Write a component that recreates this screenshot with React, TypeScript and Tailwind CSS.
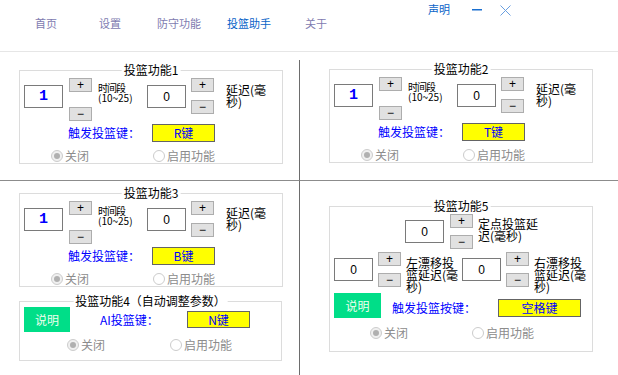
import React from 'react';

function NumBox({ value, big }: { value: string; big?: boolean }) {
  return (
    <div className="w-[39px] h-[23px] border border-[#7a7a7a] bg-white flex items-center justify-center">
      {big ? (
        <span className="text-[15px] leading-none font-bold text-[#0000ff] font-['Liberation_Mono',monospace]">{value}</span>
      ) : (
        <span className="text-[12px] leading-none text-black font-['Liberation_Sans',sans-serif]">{value}</span>
      )}
    </div>
  );
}

function SpinBtn({ sign }: { sign: string }) {
  return (
    <div className="w-[23px] h-[14px] bg-[#e1e1e1] border border-[#adadad] flex items-center justify-center text-[12px] leading-none text-black font-['Liberation_Sans',sans-serif]">
      {sign}
    </div>
  );
}

function Spin({ gap }: { gap: string }) {
  return (
    <div className={`flex flex-col ${gap}`}>
      <SpinBtn sign="+" />
      <SpinBtn sign="−" />
    </div>
  );
}

function Radio({ checked, label }: { checked?: boolean; label: string }) {
  return (
    <div className="flex items-center h-[13px]">
      <span className={`w-[12px] h-[12px] rounded-full border border-[#cccccc] flex items-center justify-center ${checked ? 'bg-[#f0f0f0]' : 'bg-white'}`}>
        {checked && <span className="w-[6px] h-[6px] rounded-full bg-[#b0b0b0]" />}
      </span>
      <span className="ml-[2px] text-[12px] leading-[12px] text-[#8c8c8c]">{label}</span>
    </div>
  );
}

function KeyBox({ text, size }: { text: string; size: string }) {
  return (
    <div className={`${size} border border-[#646464] bg-[#ffff00] flex items-center justify-center text-[12px] leading-none text-[#0000ff]`}>
      {text}
    </div>
  );
}

function Group({ title, className, children }: { title: string; className: string; children: React.ReactNode }) {
  return (
    <div className={`relative border border-[#dcdcdc] ${className}`}>
      <span className="absolute left-1/2 -translate-x-1/2 top-[-7px] bg-white px-[2px] text-[12px] leading-[12px] text-black whitespace-nowrap">
        {title}
      </span>
      {children}
    </div>
  );
}

function ShotGroup({ title, keyName }: { title: string; keyName: string }) {
  return (
    <Group title={title} className="w-[264px] h-[94px]">
      <div className="flex items-start pt-[7px] pl-[4px]">
        <div className="mt-[7px]">
          <NumBox value="1" big />
        </div>
        <div className="ml-[6px]">
          <Spin gap="gap-[15px]" />
        </div>
        <div className="ml-[6px] mt-[4px] w-[43px] text-black">
          <div className="text-[10px] leading-[11px] tracking-[-1px]">时间段</div>
          <div className="text-[10px] leading-[10px]">(10~25)</div>
        </div>
        <div className="ml-[6px] mt-[7px]">
          <NumBox value="0" />
        </div>
        <div className="ml-[5px]">
          <Spin gap="gap-[8px]" />
        </div>
        <div className="ml-[12px] mt-[6px] text-[12px] leading-[12px] text-black">
          延迟(毫
          <br />
          秒)
        </div>
      </div>
      <div className="flex items-center mt-[3px] pl-[48px]">
        <span className="w-[84px] text-[12px] leading-[12px] text-[#0000ff]">触发投篮键：</span>
        <KeyBox text={keyName} size="w-[63px] h-[18px]" />
      </div>
      <div className="flex items-center mt-[7px] pl-[31px]">
        <div className="w-[102px]">
          <Radio checked label="关闭" />
        </div>
        <Radio label="启用功能" />
      </div>
    </Group>
  );
}

function AIGroup() {
  return (
    <Group title="投篮功能4（自动调整参数）" className="mt-[14px] w-[263px] h-[60px]">
      <div className="flex items-center pt-[5px] pl-[4px]">
        <div className="w-[46px] h-[25px] bg-[#00de88] flex items-center justify-center text-[12px] leading-none text-[#eeffee]">说明</div>
        <span className="ml-[30px] w-[87px] text-[12px] leading-[12px] text-[#0000ff]">AI投篮键：</span>
        <KeyBox text="N键" size="w-[63px] h-[17px]" />
      </div>
      <div className="flex items-center mt-[6px] pl-[47px]">
        <div className="w-[103px]">
          <Radio checked label="关闭" />
        </div>
        <Radio label="启用功能" />
      </div>
    </Group>
  );
}

function DriftGroup() {
  return (
    <Group title="投篮功能5" className="w-[264px] h-[146px]">
      <div className="flex items-start pt-[7px] pl-[75px]">
        <div className="mt-[6px]">
          <NumBox value="0" />
        </div>
        <div className="ml-[6px]">
          <Spin gap="gap-[7px]" />
        </div>
        <div className="ml-[5px] mt-[4px] text-[12px] leading-[12px] text-black">
          定点投篮延
          <br />
          迟(毫秒)
        </div>
      </div>
      <div className="flex items-start mt-[3px] pl-[4px] h-[41px]">
        <div className="mt-[6px]">
          <NumBox value="0" />
        </div>
        <div className="ml-[5px]">
          <Spin gap="gap-[7px]" />
        </div>
        <div className="ml-[5px] mt-[5px] w-[56px] text-[12px] leading-[12px] text-black">
          左漂移投
          <br />
          篮延迟(毫
          <br />
          秒)
        </div>
        <div className="mt-[6px]">
          <NumBox value="0" />
        </div>
        <div className="ml-[5px]">
          <Spin gap="gap-[7px]" />
        </div>
        <div className="ml-[5px] mt-[5px] text-[12px] leading-[12px] text-black">
          右漂移投
          <br />
          篮延迟(毫
          <br />
          秒)
        </div>
      </div>
      <div className="flex items-start pl-[4px]">
        <div className="w-[47px] h-[25px] bg-[#00de88] flex items-center justify-center text-[12px] leading-none text-[#eeffee]">说明</div>
        <span className="ml-[11px] mt-[9px] w-[106px] text-[12px] leading-[12px] text-[#0000ff]">触发投篮按键：</span>
        <div className="mt-[6px]">
          <KeyBox text="空格键" size="w-[83px] h-[18px]" />
        </div>
      </div>
      <div className="flex items-center mt-[8px] pl-[40px]">
        <div className="w-[102px]">
          <Radio checked label="关闭" />
        </div>
        <Radio label="启用功能" />
      </div>
    </Group>
  );
}

export default function App() {
  return (
    <div className="w-[618px] h-[375px] bg-white overflow-hidden font-['Noto_Sans_CJK_SC',sans-serif]">
      <header className="h-[52px] border-b border-[#e6e6e6] flex items-start">
        <nav className="flex pt-[18px] text-[11px] leading-[11px] text-[#7e7bb0]">
          <span className="ml-[35px]">首页</span>
          <span className="ml-[42px]">设置</span>
          <span className="ml-[36px]">防守功能</span>
          <span className="ml-[26px] text-[#0a64c8]">投篮助手</span>
          <span className="ml-[34px]">关于</span>
        </nav>
        <span className="ml-[101px] mt-[4px] text-[11px] leading-[11px] text-[#0a64c8]">声明</span>
        <svg className="ml-[22px] mt-[9px]" width="10" height="2" viewBox="0 0 10 2">
          <rect x="0" y="0" width="10" height="1.5" fill="#1a6fd0" />
        </svg>
        <svg className="ml-[18px] mt-[5px]" width="11" height="11" viewBox="0 0 11 11">
          <path d="M0.5 0.5 L10.5 10.5 M10.5 0.5 L0.5 10.5" stroke="#6a9fe0" strokeWidth="1" />
        </svg>
      </header>

      <div className="mt-[8px] grid grid-cols-[300px_318px] grid-rows-[121px_194px] h-[315px]">
        <div className="border-r border-b border-r-[#6d6d6d] border-b-[#8c8c8c] pt-[10px] pl-[19px]">
          <ShotGroup title="投篮功能1" keyName="R键" />
        </div>
        <div className="border-b border-[#8c8c8c] pt-[9px] pl-[29px]">
          <ShotGroup title="投篮功能2" keyName="T键" />
        </div>
        <div className="border-r border-[#6d6d6d] pt-[12px] pl-[19px]">
          <ShotGroup title="投篮功能3" keyName="B键" />
          <AIGroup />
        </div>
        <div className="pt-[25px] pl-[29px]">
          <DriftGroup />
        </div>
      </div>
    </div>
  );
}
